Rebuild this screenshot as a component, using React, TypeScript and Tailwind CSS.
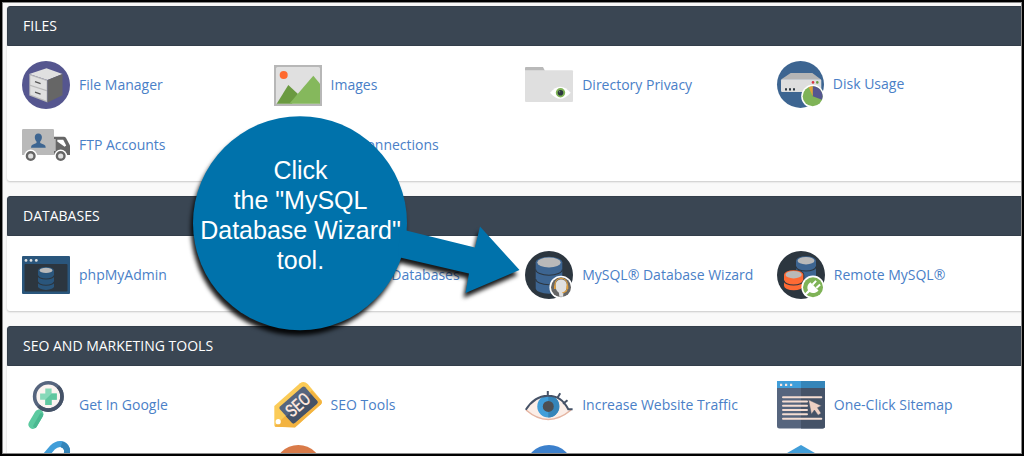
import React from 'react';

type IconProps = { children: React.ReactNode };

function Icon({ children }: IconProps) {
  return (
    <svg width="48" height="48" viewBox="0 0 48 48" fill="none" className="shrink-0 overflow-visible">
      {children}
    </svg>
  );
}

type CylinderProps = {
  x: number;
  y: number;
  w: number;
  h: number;
  ry: number;
  color: string;
  bands: number[];
  gap?: string;
};

// Database drum: x/y is the left edge and the middle of the lid
function Cylinder({ x, y, w, h, ry, color, bands, gap = '#2c363f' }: CylinderProps) {
  const rx = w / 2;
  return (
    <g>
      <path d={`M${x} ${y}v${h}a${rx} ${ry} 0 0 0 ${w} 0v${-h}z`} fill={color} />
      <ellipse cx={x + rx} cy={y} rx={rx} ry={ry} fill={color} />
      <ellipse cx={x + rx} cy={y} rx={rx - 1.6} ry={ry - 0.8} fill="#b9b9b9" />
      {bands.map((b) => (
        <path key={b} d={`M${x} ${b}a${rx} ${ry} 0 0 0 ${w} 0`} stroke={gap} strokeWidth="1.1" />
      ))}
    </g>
  );
}

const FileManagerIcon = () => (
  <Icon>
    <circle cx="24" cy="24" r="24" fill="#55568f" />
    <path d="M7.3 13 24.5 7.3 40.5 13 25.5 19z" fill="#e0e0e0" />
    <path d="M7.3 13 25.5 19v22.5L7.3 34.5z" fill="#b9b9b9" />
    <path d="M8.3 14.5 24.6 19.9v9L8.3 23.8zM8.3 25 24.6 30.2v9.600L8.3 33.5z" fill="#e0e0e0" />
    <path d="M25.5 19 40.5 13v21.2L25.5 41.5z" fill="#666" />
    <path d="m13 20.6 5.600 2M13 31.100l5.600 2" stroke="#555" strokeWidth="1.2" />
  </Icon>
);

const TruckIcon = () => (
  <Icon>
    <path d="M1.3 8h29.4Q32 8 32 9.3V34H0V9.3Q0 8 1.3 8z" fill="#b9b9b9" />
    <path d="M32 15.7h9.7q1.6 0 2.3 1.3l4 7.6V34H32z" fill="#666" />
    <path d="M35.3 18.7h5.9l3 5.8-1.6 1.2-7.3-5.2z" fill="#fff" />
    <path d="M32 18h1.7v12H32z" fill="#b9b9b9" />
    <circle cx="8.7" cy="35" r="6.5" fill="#fff" />
    <circle cx="38.7" cy="35" r="6.5" fill="#fff" />
    <circle cx="8.7" cy="35" r="3.8" fill="#e0e0e0" stroke="#666" strokeWidth="2.4" />
    <circle cx="38.7" cy="35" r="3.8" fill="#e0e0e0" stroke="#666" strokeWidth="2.4" />
    <path
      d="M16.3 12.5c-2.4 0-3.7 1.7-3.5 4 .1 1.8.8 3 1.7 3.9v1.7l-4 1.7q-1.5.7-1.5 3h14.7q0-2.300-1.5-3l-4-1.7v-1.700c.9-.9 1.6-2.1 1.7-3.9.2-2.3-1.2-4-3.6-4z"
      fill="#3d6591"
    />
  </Icon>
);

const ImagesIcon = () => (
  <Icon>
    <path d="M0 4h48v41H0z" fill="#b7b7b7" />
    <rect x="2" y="6" width="44" height="37" rx="1.5" fill="#e0e0e0" />
    <circle cx="9.7" cy="14" r="4" fill="#ff6a2f" />
    <path d="M2.7 42.7 14.3 24l9.7 9-6 9.7z" fill="#6a9a40" />
    <path d="m15.3 42.7 24-28 6.7 8v20z" fill="#85b85c" />
  </Icon>
);

const FolderIcon = () => (
  <Icon>
    <path d="M0 10V7q0-1 1-1h17l2 4z" fill="#b9b9b9" />
    <path d="M0 9.3h47q1 0 1 1V40q0 1-1 1H1q-1 0-1-1z" fill="#dfdfdf" />
    <path d="M25 31.7q10.3-12 20.7 0-10.400 12-20.7 0z" fill="#fff" />
    <circle cx="35.5" cy="31.7" r="4.7" fill="#7fb357" />
    <circle cx="35.5" cy="31.7" r="2.8" fill="#2c363f" />
    <circle cx="34.5" cy="30.7" r=".8" fill="#6d8a6a" />
  </Icon>
);

const DiskIcon = () => (
  <Icon>
    <circle cx="23.5" cy="23.4" r="23.5" fill="#3d6591" />
    <path d="M4 18.6 13.7 12h21.6l8.7 6.6z" fill="#b5b5b5" />
    <rect x="4" y="18.3" width="40.3" height="12.7" rx="1.3" fill="#dedede" />
    <path d="M8 27.2h2v2.2H8zM12 27.2h2v2.2h-2zM16 27.2h2v2.2h-2z" fill="#2c363f" />
    <circle cx="36" cy="21.4" r="1.3" fill="#d9333f" />
    <circle cx="40.3" cy="21.4" r="1.3" fill="#6a9a40" />
    <circle cx="35.7" cy="35.3" r="11.5" fill="#fff" />
    <circle cx="35.7" cy="35.3" r="10" fill="#7fb357" />
    <path d="M35.7 35.3v-10a10 10 0 0 1 9.3 13.5z" fill="#55568f" />
    <path d="M35.7 35.3v-10a10 10 0 0 0-4 .9z" fill="#e2a03c" />
  </Icon>
);

const PhpMyAdminIcon = () => (
  <Icon>
    <rect y="5" width="48" height="38" rx="1" fill="#2a567c" />
    <circle cx="4" cy="9.4" r="1.4" fill="#e0e0e0" />
    <circle cx="9" cy="9.4" r="1.4" fill="#e0e0e0" />
    <circle cx="14.3" cy="9.4" r="1.4" fill="#e0e0e0" />
    <rect x="2.5" y="13" width="43" height="27.5" rx="1" fill="#2c363f" />
    <Cylinder x={16} y={19.4} w={16} h={16} ry={3.5} color="#2a567c" bands={[24.5, 30.7]} />
  </Icon>
);

const DatabaseIcon = () => (
  <Icon>
    <circle cx="24" cy="24" r="24" fill="#2c363f" />
    <Cylinder x={10.7} y={11.5} w={26.6} h={25.5} ry={5.8} color="#3d6591" bands={[18.5, 28]} />
  </Icon>
);

const WizardIcon = () => (
  <Icon>
    <circle cx="24" cy="24" r="24" fill="#2c363f" />
    <Cylinder x={10.7} y={11.5} w={26.6} h={25.5} ry={5.8} color="#3d6591" bands={[18.5, 28]} />
    <circle cx="36" cy="36.3" r="11.6" fill="#fff" />
    <circle cx="36" cy="36.3" r="10" fill="#666" />
    <path d="M30.500 34.500c0-8 11.400-8 11.400 0 0 3.500-1.300 6-3.400 7.200l-.5 4h-3.600l-.5-4c-2.100-1.200-3.400-3.700-3.400-7.200z" fill="#e0e0e0" />
    <path d="M30 35v-2c.6-7.300 11.700-7.300 12.300 0v3.500c0 3.400-1.600 5-5 5.200" stroke="#e2a03c" strokeWidth="1.100" />
    <path d="M29 34.500h1.800v3.600H29zM41.500 34.500h1.800v3.600h-1.800z" fill="#e2a03c" />
  </Icon>
);

const RemoteIcon = () => (
  <Icon>
    <circle cx="24" cy="24" r="24" fill="#2c363f" />
    <Cylinder x={19} y={9.7} w={20} h={14.5} ry={4.5} color="#3d6591" bands={[15.5]} />
    <path d="M6 24a10.6 5.5 0 0 1 21.3 0v11H6z" fill="#2c363f" />
    <Cylinder x={7} y={23.7} w={19.3} h={11} ry={4.5} color="#ff6a34" bands={[29.5]} />
    <circle cx="36" cy="36.2" r="11.6" fill="#fff" />
    <circle cx="36" cy="36.2" r="10" fill="#7fb357" />
    <path d="m33.3 31.2 8.2 8.2c-2.7 3-6.6 3.2-8.8 1.7L28.3 45 27 43.6l4-4.3c-1.4-2.6-.6-6.1 2.3-8.1z" fill="#fff" />
    <path d="m35.5 33.7 3.6-3.8M39.3 37l3.8-3.5" stroke="#fff" strokeWidth="2" />
  </Icon>
);

const MagnifierIcon = () => (
  <Icon>
    <path d="m19.5 27-3 5" stroke="#d8d8dc" strokeWidth="4" />
    <path d="M17 33 10.8 43.5" stroke="#5ccaa0" strokeWidth="9" strokeLinecap="round" />
    <path d="m19.4 34-6.4 11" stroke="#4ab890" strokeWidth="3.6" strokeLinecap="round" />
    <circle cx="26.3" cy="15.4" r="13.7" fill="#fbf4f0" stroke="#56657e" strokeWidth="3.6" />
    <path d="M36 5.7a13.7 13.7 0 0 1-19.4 19.4" stroke="#455267" strokeWidth="3.6" />
    <path d="M23.3 7.4h6.3v5.2h5.2v6.2h-5.2V24h-6.3v-5.2h-5.2v-6.2h5.2z" fill="#87d9b9" />
    <path d="M29.6 12.6h5.2v6.2h-5.2V24h-6.3v-5.2z" fill="#60c79f" />
  </Icon>
);

const SeoTagIcon = () => (
  <Icon>
    <path d="M.3 44V25L26 2.3Q30-.7 33.7 3l14 16.7q1 2-.7 3.6L21 46.3 1.5 45.7Q.3 45.5.3 44z" fill="#fbcb57" />
    <path d="m.8 45 37-35.5 9.7 10.2q1 2-.5 3.6L21 46.5 1.500 45.7z" fill="#f3b340" />
    <path d="M6 25.5 28.300 6q1.700-1.200 3 .2L43.2 20q1 1.400-.2 2.700L20.700 42q-1.500 1-2.700-.2L5.700 28q-.9-1.300.3-2.500z" fill="#56657e" />
    <path d="m12 35.5 25-22 6.200 6.500q1 1.400-.2 2.700L20.700 42q-1.500 1-2.700-.2z" fill="#455267" />
    <circle cx="4.2" cy="40.7" r="2.6" fill="#fff" />
    <text
      x="0"
      y="0"
      transform="translate(24 24) rotate(-41) scale(.8 1)"
      textAnchor="middle"
      dominantBaseline="central"
      className="fill-[#fbe5dc] font-['Roboto'] text-[18px] font-medium"
    >
      SEO
    </text>
  </Icon>
);

const EyeIcon = () => (
  <Icon>
    <path d="M1 29C12 10 34 10 43 28l4 1Q23 49 1 29z" fill="#fbeee8" />
    <path d="M1 29q22 19 45 0" stroke="#e5b5a2" strokeWidth="1.5" />
    <circle cx="23.3" cy="25.4" r="11" fill="#419ed9" />
    <path d="M23.3 14.4a11 11 0 0 1 0 22z" fill="#3585b9" />
    <circle cx="23.3" cy="25.4" r="5.5" fill="#4d4f52" />
    <path
      d="M.8 28.8C12 10.5 34 9.5 43.3 28.3h4.3M22.8 10v5M35.2 12.3l-2.5 4.2M42.5 19.2 38 22.8"
      stroke="#455267"
      strokeWidth="2"
    />
  </Icon>
);

const SitemapIcon = () => (
  <Icon>
    <path d="M0 0h48v45q0 2.5-2.5 2.5h-43Q0 47.5 0 45z" fill="#56657e" />
    <path d="M24 0h24v45q0 2.5-2.5 2.5H24z" fill="#455267" />
    <path d="M0 0h48v7H0z" fill="#419ed9" />
    <path d="M24 0h24v7H24z" fill="#3585b9" />
    <path d="M3 2.7h2.2v2.2H3zM8 2.7h2.2v2.2H8zM13 2.7h2.2v2.2H13z" fill="#fbe5dc" />
    <path
      d="M6 16.3h38.3M6 20.5h24M6 24.7h24M6 29h24M6 33.3h24M6 37.8h38.3"
      stroke="#f5ddd2"
      strokeWidth="2"
      strokeLinecap="round"
    />
    <path d="m31.500 18.800 13 6-4 1.900 3.600 5.500-3 2-3.700-5.200-3 4.200z" fill="#efd0c3" stroke="#455267" strokeWidth=".5" />
  </Icon>
);

const LinkIcon = () => (
  <Icon>
    <path d="m21.500 17 9-10.500C36 1 43 2 44.800 8q1 4-1.800 11" stroke="#419ed9" strokeWidth="6" />
    <path d="M39.500 3.300Q43.500 4.500 44.800 8q1 4-1.800 11" stroke="#3585b9" strokeWidth="6" />
  </Icon>
);

const OrangeBallIcon = () => (
  <Icon>
    <circle cx="24.3" cy="28" r="24" fill="#d97b49" />
  </Icon>
);

const BlueBallIcon = () => (
  <Icon>
    <circle cx="24" cy="28" r="24" fill="#3c80cc" />
  </Icon>
);

const HexagonIcon = () => (
  <Icon>
    <path d="m24 4 20 11.5v22L24 49 4 37.5v-22z" fill="#419ed9" />
  </Icon>
);

type Tool = { label: string; icon: React.ReactNode; raised?: boolean };

const SECTIONS: { title: string; tools: Tool[] }[] = [
  {
    title: 'FILES',
    tools: [
      { label: 'File Manager', icon: <FileManagerIcon /> },
      { label: 'Images', icon: <ImagesIcon /> },
      { label: 'Directory Privacy', icon: <FolderIcon /> },
      { label: 'Disk Usage', icon: <DiskIcon />, raised: true },
      { label: 'FTP Accounts', icon: <TruckIcon /> },
      { label: 'FTP Connections', icon: <span className="size-12 shrink-0" /> },
    ],
  },
  {
    title: 'DATABASES',
    tools: [
      { label: 'phpMyAdmin', icon: <PhpMyAdminIcon /> },
      { label: 'MySQL® Databases', icon: <DatabaseIcon /> },
      { label: 'MySQL® Database Wizard', icon: <WizardIcon /> },
      { label: 'Remote MySQL®', icon: <RemoteIcon /> },
    ],
  },
  {
    title: 'SEO AND MARKETING TOOLS',
    tools: [
      { label: 'Get In Google', icon: <MagnifierIcon /> },
      { label: 'SEO Tools', icon: <SeoTagIcon /> },
      { label: 'Increase Website Traffic', icon: <EyeIcon /> },
      { label: 'One-Click Sitemap', icon: <SitemapIcon /> },
      { label: '', icon: <LinkIcon /> },
      { label: '', icon: <OrangeBallIcon /> },
      { label: '', icon: <BlueBallIcon /> },
      { label: '', icon: <HexagonIcon /> },
    ],
  },
];

function Callout() {
  return (
    <div className="absolute inset-0 pointer-events-none">
      <svg
        width="1024"
        height="456"
        viewBox="0 0 1024 456"
        className="absolute inset-0 drop-shadow-[-2px_5px_2px_rgba(0,0,0,0.9)]"
      >
        <circle cx="300" cy="223.2" r="107" fill="#0072ab" />
        <path d="M400 229 475 247.5 480 226.5 519.5 270 465.5 293 469 273.5 398 257z" fill="#0072ab" />
      </svg>
      <p className="absolute left-[194px] top-[155px] w-[213px] text-center whitespace-nowrap font-['Liberation_Sans',Arial,sans-serif] text-[25px] leading-[30px] text-white">
        Click
        <br />
        the "MySQL
        <br />
        Database Wizard"
        <br />
        tool.
      </p>
    </div>
  );
}

export default function App() {
  return (
    <div className="relative h-[456px] w-[1024px] overflow-hidden bg-[#f9f9f9] font-['Open_Sans',sans-serif] text-[14px]">
      <main className="flex w-[1037px] flex-col gap-[15px] pl-[7px] pt-[6px]">
        {SECTIONS.map((section) => (
          <section key={section.title} className="rounded-[3px] bg-white shadow-[0_1px_2px_rgba(0,0,0,0.2)]">
            <h2 className="flex h-10 items-center rounded-t-[3px] border border-[#333e4a] bg-[#3a4653] px-[15px] pb-[2px] text-white">
              {section.title}
            </h2>
            <div className="grid grid-cols-[repeat(4,251.6px)] pb-[6px] pl-[15px] pt-[9px]">
              {section.tools.map((tool, i) => (
                <a key={i} className="flex h-[60px] items-center gap-[9px] text-[#4a80c7]">
                  {tool.icon}
                  <span
                    className={tool.raised ? '-ml-px whitespace-nowrap pb-[4px]' : 'whitespace-nowrap pb-[2px]'}
                  >
                    {tool.label}
                  </span>
                </a>
              ))}
            </div>
          </section>
        ))}
      </main>

      <Callout />

      {/* Frame */}
      <div className="pointer-events-none absolute inset-0 border-2 border-black shadow-[inset_0_0_0_1px_#8a8a8a]" />
    </div>
  );
}
